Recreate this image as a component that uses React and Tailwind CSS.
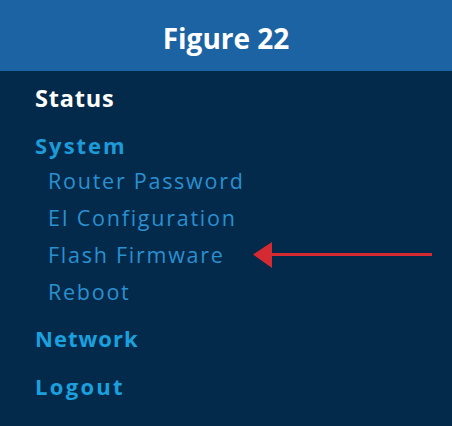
export default function App() {
  const os = { fontFamily: '"Open Sans", sans-serif' };
  return (
    <div className="w-[452px] h-[426px] flex flex-col bg-[#032a4b] overflow-hidden">
      <div className="h-[71px] shrink-0 bg-[#1b63a3] flex items-center justify-center pt-1">
        <span className="text-white font-bold text-[28px] leading-none" style={os}>
          Figure 22
        </span>
      </div>
      <div className="flex flex-col pl-[35px] pt-[9px]" style={os}>
        <div className="h-[36px] leading-[36px] text-[23.5px] font-bold tracking-[0.8px] text-white">Status</div>
        <div className="mt-[12px] h-[34px] leading-[34px] text-[22px] font-bold tracking-[2px] text-[#1c9bd8]">System</div>
        <div className="flex flex-col pl-[13px] text-[21.5px] tracking-[1.75px] text-[#2a90d0]">
          <div className="h-[37px] leading-[37px]">Router Password</div>
          <div className="h-[37px] leading-[37px]">EI Configuration</div>
          <div className="h-[37px] leading-[37px]">Flash Firmware</div>
          <div className="h-[37px] leading-[37px]">Reboot</div>
        </div>
        <div className="mt-[10px] h-[36px] leading-[36px] text-[22px] font-bold tracking-[1px] text-[#1aa0de]">Network</div>
        <div className="mt-[12px] h-[36px] leading-[36px] text-[22px] font-bold tracking-[2.3px] text-[#1aa0de]">Logout</div>
      </div>
      <svg className="absolute left-[252px] top-[241px]" width="182" height="28" viewBox="0 0 182 28">
        <polygon points="1,13.5 20,1 20,27" fill="#d62a32" />
        <rect x="19" y="12" width="161" height="3" fill="#d62a32" />
      </svg>
    </div>
  );
}
